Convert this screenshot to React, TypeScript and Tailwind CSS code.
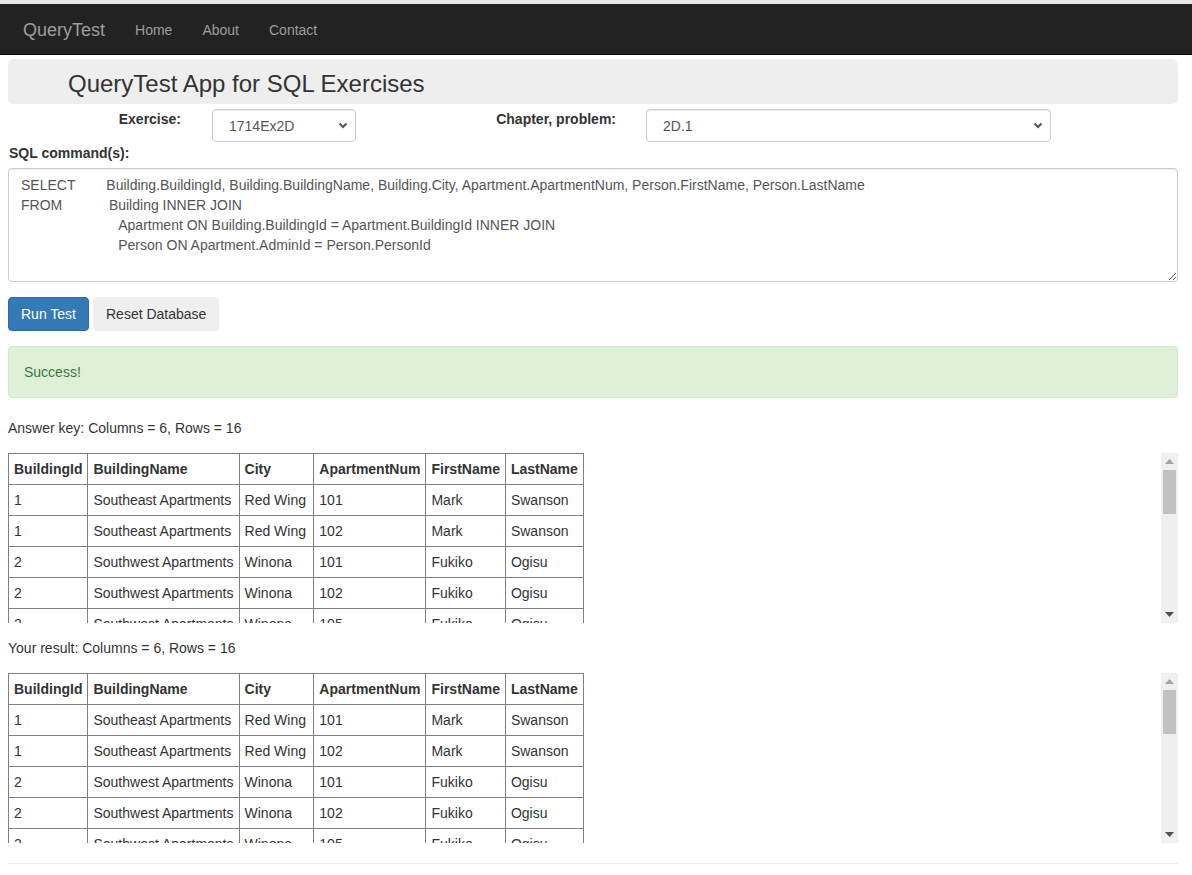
import React from 'react';

const columns = ['BuildingId', 'BuildingName', 'City', 'ApartmentNum', 'FirstName', 'LastName'];

const rows = [
    ['1', 'Southeast Apartments', 'Red Wing', '101', 'Mark', 'Swanson'],
    ['1', 'Southeast Apartments', 'Red Wing', '102', 'Mark', 'Swanson'],
    ['2', 'Southwest Apartments', 'Winona', '101', 'Fukiko', 'Ogisu'],
    ['2', 'Southwest Apartments', 'Winona', '102', 'Fukiko', 'Ogisu'],
    ['2', 'Southwest Apartments', 'Winona', '105', 'Fukiko', 'Ogisu'],
    ['2', 'Southwest Apartments', 'Winona', '106', 'Fukiko', 'Ogisu'],
    ['3', 'Northeast Apartments', 'Red Wing', '101', 'Pat', 'Jones'],
    ['3', 'Northeast Apartments', 'Red Wing', '102', 'Pat', 'Jones'],
    ['3', 'Northeast Apartments', 'Red Wing', '103', 'Pat', 'Jones'],
    ['4', 'Northwest Apartments', 'Winona', '101', 'Lee', 'Chan'],
    ['4', 'Northwest Apartments', 'Winona', '102', 'Lee', 'Chan'],
    ['4', 'Northwest Apartments', 'Winona', '103', 'Lee', 'Chan'],
    ['5', 'Central Apartments', 'Rochester', '101', 'Ann', 'Smith'],
    ['5', 'Central Apartments', 'Rochester', '102', 'Ann', 'Smith'],
    ['5', 'Central Apartments', 'Rochester', '201', 'Ann', 'Smith'],
    ['5', 'Central Apartments', 'Rochester', '202', 'Ann', 'Smith'],
];

const sql =
    'SELECT        Building.BuildingId, Building.BuildingName, Building.City, Apartment.ApartmentNum, Person.FirstName, Person.LastName\n' +
    'FROM            Building INNER JOIN\n' +
    '                         Apartment ON Building.BuildingId = Apartment.BuildingId INNER JOIN\n' +
    '                         Person ON Apartment.AdminId = Person.PersonId';

function Chevron() {
    return (
        <svg className="absolute right-[8px] top-[13px] pointer-events-none" width="10" height="7" viewBox="0 0 10 7">
            <path d="M1.5 1.5 L5 5 L8.5 1.5" fill="none" stroke="#555" strokeWidth="2" />
        </svg>
    );
}

function ResultTable() {
    return (
        <div className="flex h-[170px]">
            <div className="flex-1 h-full overflow-y-auto">
                <table className="border-collapse text-[14px] leading-[20px] text-[#333]">
                    <thead>
                        <tr>
                            {columns.map((c) => (
                                <th key={c} className="border border-[#808080] px-[5px] py-[5px] text-left font-bold">
                                    {c}
                                </th>
                            ))}
                        </tr>
                    </thead>
                    <tbody>
                        {rows.map((r, i) => (
                            <tr key={i}>
                                {r.map((v, j) => (
                                    <td key={j} className="border border-[#808080] px-[5px] py-[5px] whitespace-nowrap">
                                        {v}
                                    </td>
                                ))}
                            </tr>
                        ))}
                    </tbody>
                </table>
            </div>
            {/* scrollbar */}
            <div className="w-[17px] h-full bg-[#f0f0f0] flex flex-col">
                <div className="h-[17px] flex items-center justify-center">
                    <svg width="9" height="5" viewBox="0 0 9 5">
                        <path d="M4.5 0 L9 5 L0 5 Z" fill="#a3a3a3" />
                    </svg>
                </div>
                <div className="flex-1 px-[2px]">
                    <div className="h-[44px] bg-[#c1c1c1]" />
                </div>
                <div className="h-[17px] flex items-center justify-center">
                    <svg width="9" height="5" viewBox="0 0 9 5">
                        <path d="M0 0 L9 0 L4.5 5 Z" fill="#505050" />
                    </svg>
                </div>
            </div>
        </div>
    );
}

export default function App() {
    return (
        <div className="min-h-[875px] bg-white text-[14px] leading-[20px] text-[#333] font-['Liberation_Sans',Arial,sans-serif]">
            <div className="h-[4px] bg-[#e6e6e6]" />

            {/* Navbar */}
            <nav className="h-[51px] bg-[#222] border-b border-[#080808] flex items-center pl-[23px] pt-[2px]">
                <span className="text-[18px] text-[#9d9d9d]">QueryTest</span>
                <div className="flex ml-[15px]">
                    <a className="px-[15px] text-[#9d9d9d]">Home</a>
                    <a className="px-[15px] text-[#9d9d9d]">About</a>
                    <a className="px-[15px] text-[#9d9d9d]">Contact</a>
                </div>
            </nav>

            <div className="pl-[8px] pr-[14px]">
                {/* Title */}
                <div className="mt-[4px] h-[45px] bg-[#eee] rounded-[6px] flex items-center pl-[60px] pt-[5px]">
                    <h2 className="text-[24px] leading-[26px] text-[#333]">QueryTest App for SQL Exercises</h2>
                </div>

                {/* Selectors */}
                <div className="flex mt-[5px]">
                    <label className="w-[188px] pr-[15px] text-right font-bold">Exercise:</label>
                    <div className="relative ml-[16px] w-[144px]">
                        <select className="appearance-none w-full h-[33px] pl-[16px] pr-[24px] border border-[#ccc] rounded-[4px] bg-white text-[#555] shadow-[inset_0_1px_1px_rgba(0,0,0,0.075)]">
                            <option>1714Ex2D</option>
                        </select>
                        <Chevron />
                    </div>
                    <label className="w-[275px] pr-[15px] text-right font-bold">Chapter, problem:</label>
                    <div className="relative ml-[15px] w-[405px]">
                        <select className="appearance-none w-full h-[33px] pl-[16px] pr-[24px] border border-[#ccc] rounded-[4px] bg-white text-[#555] shadow-[inset_0_1px_1px_rgba(0,0,0,0.075)]">
                            <option>2D.1</option>
                        </select>
                        <Chevron />
                    </div>
                </div>

                {/* SQL */}
                <label className="block mt-[1px] pl-[1px] font-bold">SQL command(s):</label>
                <textarea
                    className="block mt-[5px] w-full h-[114px] px-[12px] py-[6px] border border-[#ccc] rounded-[4px] text-[#555] leading-[20px] shadow-[inset_0_1px_1px_rgba(0,0,0,0.075)]"
                    defaultValue={sql}
                    spellCheck={false}
                />

                {/* Buttons */}
                <div className="flex gap-[4px] mt-[15px]">
                    <button className="h-[34px] px-[12px] rounded-[4px] border border-[#2e6da4] bg-[#337ab7] text-white">Run Test</button>
                    <button className="h-[34px] px-[12px] rounded-[4px] border border-transparent bg-[#efefef] text-[#333]">Reset Database</button>
                </div>

                {/* Alert */}
                <div className="mt-[15px] h-[52px] px-[15px] py-[15px] border border-[#d6e9c6] rounded-[4px] bg-[#dff0d8] text-[#3c763d]">
                    Success!
                </div>

                <p className="mt-[20px]">Answer key: Columns = 6, Rows = 16</p>
                <div className="mt-[15px]">
                    <ResultTable />
                </div>

                <p className="mt-[15px]">Your result: Columns = 6, Rows = 16</p>
                <div className="mt-[15px]">
                    <ResultTable />
                </div>

                <hr className="mt-[20px] border-t border-[#eee]" />
            </div>
        </div>
    );
}
